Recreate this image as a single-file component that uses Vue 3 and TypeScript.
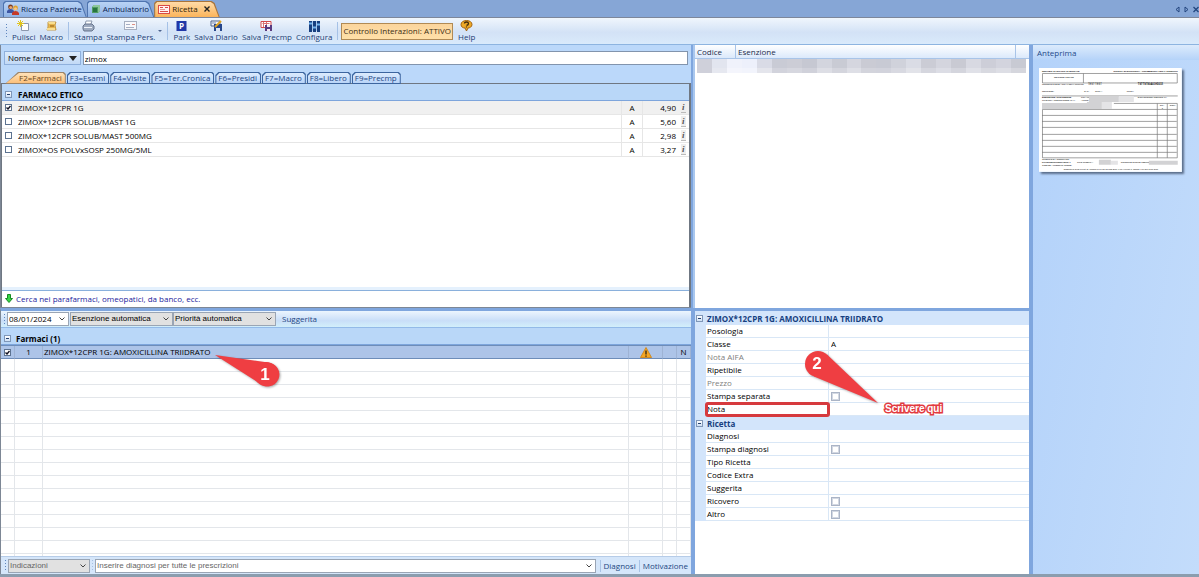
<script setup lang="ts">
import { ref } from 'vue'

interface Drug { name: string; cls: string; price: string; checked: boolean }
interface Prop { label: string; value?: string; muted?: boolean; check?: boolean; marked?: boolean }

const search = ref('zimox')
const drugs = ref<Drug[]>([
  { name: 'ZIMOX*12CPR 1G', cls: 'A', price: '4,90', checked: true },
  { name: 'ZIMOX*12CPR SOLUB/MAST 1G', cls: 'A', price: '5,60', checked: false },
  { name: 'ZIMOX*12CPR SOLUB/MAST 500MG', cls: 'A', price: '2,98', checked: false },
  { name: 'ZIMOX*OS POLVxSOSP 250MG/5ML', cls: 'A', price: '3,27', checked: false },
])
const categories = ['F2=Farmaci', 'F3=Esami', 'F4=Visite', 'F5=Ter.Cronica', 'F6=Presidi', 'F7=Macro', 'F8=Libero', 'F9=Precmp']
const drugProps: Prop[] = [
  { label: 'Posologia' },
  { label: 'Classe', value: 'A' },
  { label: 'Nota AIFA', muted: true },
  { label: 'Ripetibile' },
  { label: 'Prezzo', muted: true },
  { label: 'Stampa separata', check: true },
  { label: 'Nota', marked: true },
]
const recipeProps: Prop[] = [
  { label: 'Diagnosi' },
  { label: 'Stampa diagnosi', check: true },
  { label: 'Tipo Ricetta' },
  { label: 'Codice Extra' },
  { label: 'Suggerita' },
  { label: 'Ricovero', check: true },
  { label: 'Altro', check: true },
]
const groups = [
  { title: 'ZIMOX*12CPR 1G: AMOXICILLINA TRIIDRATO', rows: drugProps },
  { title: 'Ricetta', rows: recipeProps },
]
const mosaic = ['#cfd0da', '#e2e5ef', '#f0f2fb', '#edf0fb', '#d9dbe6', '#c9cbd5', '#cccdd6', '#c6c8d2', '#d3d5de', '#c9cbd4', '#d5d6df', '#cacbd4', '#c8cad4', '#d0d2db', '#dadce5', '#cbccd5', '#d4d5de', '#c9cad3', '#d8d9e2', '#cdced8', '#d3d4de', '#c8cad3']
const mosaicLow = ['#cfd0da', '#e6e8f0', '#f4f5fc', '#f2f4fc', '#e4e5ec', '#d2d3dc', '#d6d7df', '#d0d1da', '#dddee5', '#d4d5dd', '#dedfe6', '#d3d4dc', '#d2d3dc', '#d8d9e1', '#e2e3e9', '#d5d6de', '#dcdde5', '#d4d5dd', '#e0e1e8', '#d8d9e0', '#dddee5', '#d5d6dd']
</script>

<template>
  <div class="app">
    <nav class="tabs">
      <button class="tab">
        <svg width="12" height="11" viewBox="0 0 12 11"><circle cx="3.5" cy="3" r="2.4" fill="#7a3d22" /><circle cx="3.7" cy="3.6" r="1.5" fill="#e9a76d" /><path d="M0 9V7q1-2 3.500-2T7 7v2z" fill="#3d57a4" /><circle cx="8.500" cy="4" r="2.400" fill="#e0a12c" /><circle cx="8.500" cy="4.800" r="1.500" fill="#f5c78e" /><path d="M5 11V9q1-2 3.500-2T12 9v2z" fill="#c53a28" /></svg>
        <span>Ricerca Paziente</span>
      </button>
      <button class="tab">
        <svg width="10" height="10" viewBox="0 0 10 10"><path d="M1 3L3 1h6v6L7 9H1z" fill="#4f9c62" /><path d="M3 1h6v6L7 9V3H1z" fill="#8ec69a" /><rect x="2" y="4" width="4" height="4" fill="#28743f" /></svg>
        <span>Ambulatorio</span>
      </button>
      <button class="tab current">
        <svg width="12" height="9" viewBox="0 0 12 9"><rect x=".5" y=".5" width="11" height="8" fill="#fff3f1" stroke="#d84c48" /><path d="M2 2.500h3M7 2.500h3M2 6.500h8" stroke="#d84c48" /><path d="M2 4.500h5" stroke="#e89390" /></svg>
        <span>Ricetta</span>
        <svg class="x" width="6" height="6" viewBox="0 0 6 6"><path d="M.5 .5l5 5M5.500 .5l-5 5" stroke="#222" stroke-width="1.400" /></svg>
      </button>
      <div class="tabnav">
        <button aria-label="Scheda precedente"><svg width="5" height="7" viewBox="0 0 5 7"><path d="M4 1v5L1 3.500z" fill="none" stroke="#23457e" /></svg></button>
        <button aria-label="Scheda successiva"><svg width="5" height="7" viewBox="0 0 5 7"><path d="M1 1v5l3-2.500z" fill="none" stroke="#23457e" /></svg></button>
        <button aria-label="Chiudi"><svg width="6" height="7" viewBox="0 0 6 7"><path d="M.5 1l5 5M5.500 1l-5 5" stroke="#23457e" stroke-width="1.300" /></svg></button>
      </div>
    </nav>

    <header class="toolbar">
      <i class="grip"></i>
      <button class="tool"><svg viewBox="0 0 13 12"><path d="M4.500 3.500h7v7h-7z" fill="#fff" stroke="#8c98ad" /><path d="M3.500 0v7M0 3.500h7M1 1l5 5M6 1L1 6" stroke="#e2c51e" /></svg>Pulisci</button>
      <button class="tool"><svg viewBox="0 0 13 12"><path d="M3 2h8l-1 3 1 5H2l1-3z" fill="#e8b850" stroke="#c39a4a" /><path d="M3 2h7v2H4zM2 8h8v2H2z" fill="#f8de91" /><path d="M5 6h4" stroke="#8e5b13" /></svg>Macro</button>
      <i class="sep"></i>
      <button class="tool"><svg viewBox="0 0 13 12"><path d="M4 1h6L8.500 5H3z" fill="#fff" stroke="#8c99ae" /><path d="M1 6l2-2h7l2 2v3l-2 2H2L1 9z" fill="#9eabc0" stroke="#67758d" /><path d="M2 7.500h8" stroke="#eef3fa" /></svg>Stampa</button>
      <button class="tool"><svg viewBox="0 0 13 12"><rect x=".5" y="1.500" width="12" height="8" fill="#f8f8fb" stroke="#a5aec0" /><path d="M2 4.500h4M2 7.500h8" stroke="#a4aec4" /><path d="M8 4.500h3" stroke="#dd8f86" /></svg>Stampa Pers.</button>
      <button class="more" aria-label="Altre stampe"><svg width="5" height="4" viewBox="0 0 5 4"><path d="M0 1h4L2 3z" fill="#4c638d" /></svg></button>
      <i class="sep"></i>
      <button class="tool"><svg viewBox="0 0 13 12"><rect x="1.500" y="1" width="10" height="10" fill="#2138a8" /><text x="6.500" y="9" text-anchor="middle" font-size="8" font-weight="700" fill="#fff">P</text></svg>Park</button>
      <button class="tool"><svg viewBox="0 0 13 12"><path d="M1 1h9v5H1z" fill="#f1f4fa" stroke="#4e6289" /><path d="M4 4h8v7H4z" fill="#27478c" /><path d="M6 8h4v3H6z" fill="#dce4f2" /><path d="M11 1L5 7" stroke="#e0a321" stroke-width="2" /><path d="M2 3h4" stroke="#7b8db0" /></svg>Salva Diario</button>
      <button class="tool"><svg viewBox="0 0 13 12"><path d="M1 1.500h10v6H1z" fill="#fff" stroke="#d44a4a" /><path d="M2.500 3.500h7M3.500 2v5M6.500 2v3" stroke="#d97474" /><path d="M5 5h7v6H5z" fill="#583b80" /><path d="M7 5h3v2H7zM7 9h3v2H7z" fill="#f2e8f2" /></svg>Salva Precmp</button>
      <button class="tool"><svg viewBox="0 0 13 12"><path d="M1 1h11v10H1z" fill="#a9c9ef" /><path d="M2.500 1v11M6.500 1v11M10.500 1v11" stroke="#173f80" stroke-width="3" /><path d="M1 3.500h3M5 7.500h3M9 4.500h3" stroke="#70b3ef" stroke-width="2" /></svg>Configura</button>
      <i class="sep"></i>
      <button class="interactions">Controllo Interazioni: ATTIVO</button>
      <button class="tool"><svg viewBox="0 0 13 12"><path d="M6.500 .5c3 0 5.500 1.500 5.500 4S9.500 8 8 8l-1.500 3L5 8C3 8 1 7 1 4.500s2.500-4 5.500-4z" fill="#eda928" stroke="#a36313" /><path d="M4.500 3.500q0-1.500 2-1.500t2 1.500-2 2M6.500 6.500v1" fill="none" stroke="#432b0c" stroke-width="1.300" /></svg>Help</button>
    </header>

    <main class="work">
      <section class="left">
        <div class="finder">
          <div class="searchrow">
            <button class="mode">Nome farmaco <svg width="8" height="5" viewBox="0 0 8 5"><path d="M0 0h8L4 5z" fill="#222" /></svg></button>
            <input v-model="search" class="query" type="text" aria-label="Nome farmaco" />
          </div>
          <div class="cats">
            <button v-for="(c, i) in categories" :key="c" class="cat" :class="{ on: i === 0 }"><span>{{ c }}</span></button>
          </div>
          <div class="results">
            <h2 class="group"><button class="fold" aria-label="Comprimi"></button>FARMACO ETICO</h2>
            <table class="drugs">
              <tbody>
                <tr v-for="d in drugs" :key="d.name" :class="{ picked: d.checked }">
                  <td class="ck"><input v-model="d.checked" type="checkbox" :aria-label="d.name" /></td>
                  <td>{{ d.name }}</td>
                  <td class="cl">{{ d.cls }}</td>
                  <td class="pr">{{ d.price }}</td>
                  <td class="inf"><button aria-label="Informazioni">i</button></td>
                </tr>
              </tbody>
            </table>
            <a class="extra" href="#"><svg width="8" height="9" viewBox="0 0 8 9"><path d="M2.500 .5h3v4h2L4 8.500.5 4.500h2z" fill="#35d546" stroke="#168a24" /></svg>Cerca nei parafarmaci, omeopatici, da banco, ecc.</a>
          </div>
        </div>

        <div class="orders">
          <div class="options">
            <i class="grip"></i>
            <select class="date" aria-label="Data"><option>08/01/2024</option></select>
            <select class="auto" aria-label="Esenzione"><option>Esenzione automatica</option></select>
            <select class="auto" aria-label="Priorità"><option>Priorità automatica</option></select>
            <button class="link">Suggerita</button>
          </div>
          <h2 class="group second"><button class="fold" aria-label="Comprimi"></button>Farmaci (1)</h2>
          <div class="gridwrap">
            <table class="grid">
              <colgroup><col class="g1" /><col class="g2" /><col /><col class="g3" /><col class="g4" /><col class="g4" /></colgroup>
              <tbody>
                <tr class="sel">
                  <td><input type="checkbox" checked aria-label="Seleziona farmaco" /></td>
                  <td class="mid">1</td>
                  <td>ZIMOX*12CPR 1G: AMOXICILLINA TRIIDRATO</td>
                  <td class="mid"><svg width="12" height="11" viewBox="0 0 12 11"><path d="M6 .5L11.500 10.500H.5z" fill="#f5a623" stroke="#d08b25" stroke-linejoin="round" /><path d="M6 3.500v4M6 8.500v1.200" stroke="#2b2110" stroke-width="1.300" /></svg></td>
                  <td></td>
                  <td class="mid">N</td>
                </tr>
                <tr v-for="n in 16" :key="n"><td v-for="c in 6" :key="c"></td></tr>
              </tbody>
            </table>
            <svg class="pin one" width="66" height="36" viewBox="0 0 66 36"><path d="M0 3L53 10.500A12 12 0 1 1 44 31z" fill="#ef3e42" /><circle cx="51" cy="22" r="12" fill="#ef3e42" /><text x="50" y="28" text-anchor="middle">1</text></svg>
          </div>
          <div class="diag">
            <i class="grip"></i>
            <select class="ind" aria-label="Indicazioni"><option>Indicazioni</option></select>
            <i class="grip thin"></i>
            <select class="all" aria-label="Diagnosi per tutte le prescrizioni"><option>Inserire diagnosi per tutte le prescrizioni</option></select>
            <button class="link">Diagnosi</button>
            <button class="link">Motivazione</button>
          </div>
        </div>
      </section>

      <section class="center">
        <div class="exempt">
          <table>
            <thead><tr><th class="code">Codice</th><th>Esenzione</th><th class="tail"></th></tr></thead>
          </table>
          <div class="mosaic"><i v-for="(m, i) in mosaic" :key="i" :style="{ background: m }"></i></div>
          <div class="mosaic low"><i v-for="(m, i) in mosaicLow" :key="i" :style="{ background: m }"></i></div>
        </div>
        <div class="props">
          <table>
            <colgroup><col class="p1" /><col class="p2" /><col /></colgroup>
            <tbody v-for="(g, gi) in groups" :key="g.title">
              <tr class="head"><th class="gut"><button class="fold small" aria-label="Comprimi"></button></th><th colspan="2">{{ g.title }}</th></tr>
              <tr v-for="(p, pi) in g.rows" :key="p.label">
                <td class="gut"></td>
                <td class="name" :class="{ muted: p.muted, marked: p.marked }"><label :for="`p${gi}-${pi}`">{{ p.label }}</label></td>
                <td class="val">
                  <input v-if="p.check" :id="`p${gi}-${pi}`" class="soft" type="checkbox" />
                  <input v-else :id="`p${gi}-${pi}`" class="txt" type="text" :value="p.value" />
                </td>
              </tr>
            </tbody>
          </table>
          <svg class="pin two" width="76" height="54" viewBox="0 0 76 54"><circle cx="13" cy="13" r="13" fill="#ef3e42" /><path d="M22 3.500L73 52 9 25.500z" fill="#ef3e42" /><text x="12" y="18" text-anchor="middle">2</text></svg>
          <strong class="note">Scrivere qui</strong>
        </div>
      </section>

      <aside class="preview">
        <h2>Anteprima</h2>
        <svg class="sheet" viewBox="0 0 143 104">
          <rect width="143" height="104" fill="#fff" />
          <g fill="#000" font-size="2.300">
            <text x="3" y="4" font-weight="700">SERVIZIO SANITARIO NAZIONALE</text>
            <text x="139" y="4" text-anchor="end" font-weight="700">RICETTA ELETTRONICA - PROMEMORIA PER L'ASSISTITO</text>
            <text x="15" y="10">REGIONE MOLISE</text>
            <text x="3" y="17" font-size="1.900">COGNOME E NOME / INIZIALI DELL'ASSISTITO:</text>
            <text x="49" y="17" font-size="2.600">TEST TEST</text>
            <text x="99" y="17" font-weight="700" font-size="2.600">TSTTST80A01H501X</text>
            <text x="3" y="24">INDIRIZZO:</text><text x="45" y="24">CAP:</text><text x="56" y="24">CITTA':</text><text x="88" y="24">PROV:</text>
            <text x="3" y="30" font-weight="700">ESENZIONE: NON ESENTE</text><text x="42" y="30" font-size="1.900">SIGLA PR:</text><text x="99" y="30">DISPOSIZIONI REGIONALI:</text>
            <text x="3" y="33" font-size="2.100">TIPOLOGIA PRESCRIZIONE (S,H):</text><text x="42" y="33">ALTRO:</text>
            <text x="121" y="38">QTA</text><text x="131" y="38">NOTA</text><text x="123" y="41">1</text>
            <text x="3" y="92">QUESITO DIAGNOSTICO:</text>
            <text x="3" y="95" font-size="1.900" font-weight="700">N.CONFEZIONI/PRESTAZIONI: 1</text><text x="38" y="95">TIPO RICETTA:</text><text x="82" y="95" font-size="2.100">COGNOME E NOME MEDICO:</text>
            <text x="3" y="98">CODICE AUTENTICAZIONE:</text>
            <text x="72" y="102" text-anchor="middle" font-size="2">Rilasciato ai sensi dell'art.11, comma 16 del DL 31 mag 2010, n.78 e dell'art.1, comma 4 del DM 2 nov 2011</text>
          </g>
          <path d="M3.500 5.500H138.500V15H3.500zM44.500 5.500V15M3 28H139M75 35.500H138.500V90H3.500V41.500H138.500M118.500 35.500V90M128.500 35.500V90M3 47.500H138M3 53.500H138M3 59.500H138M3 66.500H138M3 72.500H138M3 78.500H138M3 84.500H138" fill="none" stroke="#777" stroke-width=".7" />
          <g fill="#d2d2d4"><path d="M50 28h30v6H50zM3 35h45v6H3zM48 34h15v7H48zM60 92h12v5H60zM110 93h29v4h-29z" /><path d="M80 28h15v6H80zM63 34h10v7H63zM72 93h7v4h-7z" fill="#e4e4e6" /></g>
        </svg>
      </aside>
    </main>
  </div>
</template>

<style scoped>
.app, .app * { box-sizing: border-box; }
.app {
  height: 100vh; display: flex; flex-direction: column; overflow: hidden;
  font: 8px/12px "Open Sans", "Noto Sans", sans-serif; color: #000; background: #bbd8fa;
  border-bottom: 3px solid #8b9dae;
}
button, input, select { font: inherit; color: inherit; margin: 0; padding: 0; border: 0; background: none; border-radius: 0; outline: none; }
button { white-space: nowrap; }
svg { display: block; flex: none; }
h2 { margin: 0; font: inherit; font-weight: 700; }
table { border-collapse: separate; border-spacing: 0; table-layout: fixed; width: 100%; }
td, th { padding: 0; text-align: left; white-space: nowrap; }

.tabs { flex: none; height: 18px; display: flex; align-items: flex-end; padding-left: 3px; background: #86a6d6; border-bottom: 1px solid #7d879b; }
.tab {
  position: relative; z-index: 0; height: 16px; display: flex; align-items: center; gap: 2px; padding: 0 5px 0 4px;
  color: #0b2450; background: #4f75b0; clip-path: polygon(0 2px, 2px 0, calc(100% - 8px) 0, calc(100% - 5px) 2px, 100% 100%, 0 100%);
}
.tab::before { content: ""; position: absolute; z-index: -1; inset: 1px 1px 0; background: linear-gradient(#b9d3f5, #8fb3e5); clip-path: inherit; }
.tab.current { padding: 0 10px 0 4px; background: #a9743a; color: #2a1a06; }
.tab.current::before { background: linear-gradient(#ffdba8, #fbb45a); }
.tab .x { margin-left: 4px; }
.tabnav { margin-left: auto; display: flex; align-items: center; gap: 4px; height: 16px; }

.toolbar {
  flex: none; height: 27px; display: flex; align-items: center; padding-left: 3px; color: #1d3d74;
  background: linear-gradient(#f0f6fd, #d3e2f6 55%, #d9eafb); border-bottom: 1px solid #8db4e0;
}
.grip { flex: none; width: 3px; height: 16px; margin: 0 2px; background: radial-gradient(circle, #5f86bd 1px, transparent 1px) 0 0 / 3px 3px; }
.tool { height: 22px; padding: 0 2px; display: flex; flex-direction: column; align-items: center; line-height: 10px; }
.tool svg { width: 13px; height: 12px; }
.sep { width: 1px; height: 18px; background: #a5c1e6; margin: 0 3px; }
.more { padding: 0 1px; }
.interactions { height: 17px; padding: 0 1px; margin-right: 3px; background: linear-gradient(#fbd59d, #ffe0a8); border: 1px solid #b08a55; color: #3c2e14; }

.work { flex: 1; min-height: 0; display: grid; grid-template-columns: 693fr 340fr 166fr; }
.left, .center { min-width: 0; min-height: 0; display: flex; flex-direction: column; border-right: 4px solid #7fa6de; }
.left { border-right-width: 2px; }
.finder { flex: none; height: 263px; display: flex; flex-direction: column; border-bottom: 1px solid #7d8795; border-left: 1px solid #7d8795; }
.searchrow { display: flex; gap: 2px; padding: 6px 3px 0 3px; }
.mode { height: 14px; padding: 0 3px; display: flex; align-items: center; gap: 5px; border: 1px solid #8fb0dc; background: linear-gradient(#dcebfc, #c2d9f6); }
.query { flex: 1; min-width: 0; height: 14px; padding: 0 1px; background: #fff; border: 1px solid #8294ad; }
.cats { display: flex; align-items: flex-end; height: 19px; padding-left: 4px; margin-bottom: -1px; }
.cat {
  position: relative; z-index: 0; height: 12px; padding: 0 4px 0 3px; line-height: 12px; color: #1d4682; background: #3c659f;
  clip-path: polygon(0 3px, 3px 0, calc(100% - 2px) 0, 100% 2px, 100% 100%, 0 100%); margin-right: 1px;
}
.cat::before { content: ""; position: absolute; z-index: -1; inset: 1px; background: linear-gradient(#dcebfd, #b9d4f8); clip-path: inherit; }
.cat.on { padding: 0 4px 0 14px; clip-path: polygon(0 100%, 13px 0, calc(100% - 2px) 0, 100% 2px, 100% 100%); color: #6b4a1d; background: #9c8468; }
.cat.on::before { background: linear-gradient(#ffe2b9, #fcc07a); }
.results { flex: 1; min-height: 0; display: flex; flex-direction: column; background: #fff; border: 1px solid #6f7782; border-width: 1px 2px 0 1px; }
.group { flex: none; height: 17px; line-height: 10px; display: flex; align-items: flex-end; gap: 6px; padding: 0 0 0 3px; background: #b9d7f8; border-bottom: 1px solid #7da5dc; }
.fold { position: relative; flex: none; width: 7px; height: 7px; margin-bottom: 2px; background: linear-gradient(#fff, #cddff5); border: 1px solid #7f97b8; }
.fold::after { content: ""; position: absolute; left: 1px; right: 1px; top: 2px; height: 1px; background: #24406e; }
.drugs td { height: 14px; line-height: 13px; border-bottom: 1px solid #e6e6e6; }
.drugs .picked { background: #f0f0f0; }
.drugs .ck { width: 16px; padding-left: 3px; }
.drugs .cl { width: 22px; text-align: center; border-left: 1px solid #e6e6e6; border-right: 1px solid #e6e6e6; }
.drugs .pr { width: 33px; text-align: right; }
.drugs .inf { width: 13px; padding-left: 5px; }
.inf button { display: block; font: italic 700 9px/10px "Liberation Serif", serif; color: #555; border-bottom: 1px solid #bbb; background: #eee; padding: 0 1px; }
input[type="checkbox"] { appearance: none; display: block; width: 7px; height: 7px; border: 1px solid #5c7391; background: #fff; }
input[type="checkbox"]:checked { background: url("data:image/svg+xml,%3Csvg xmlns='http://www.w3.org/2000/svg' width='5' height='5'%3E%3Cpath d='M.5 2.500L2 4 4.500 1' fill='none' stroke='%23112' stroke-width='1.400'/%3E%3C/svg%3E") #fff; }
.extra { margin-top: auto; height: 20px; padding: 3px 0 0 3px; display: flex; align-items: center; gap: 3px; color: #1a1a9c; text-decoration: none; background: linear-gradient(#e5f1fd 0 3px, #8ab0dc 3px 4px, #fff 4px); }

.orders { flex: 1; min-height: 0; display: flex; flex-direction: column; border-top: 3px solid #7fa6de; border-left: 1px solid #7d8795; }
.options { flex: none; height: 17px; display: flex; align-items: center; background: linear-gradient(#ecf5fe, #c9def8 60%, #d2effb); border-bottom: 1px solid #93bae8; padding-left: 1px; }
.options .grip, .diag .grip { height: 13px; margin: 0 1px; }
select {
  appearance: none; height: 14px; line-height: 12px; padding: 0 1px; border: 1px solid #9aa5b4; font-size: 8px; font-family: "Liberation Sans", Arial, sans-serif;
  background: url("data:image/svg+xml,%3Csvg xmlns='http://www.w3.org/2000/svg' width='6' height='4'%3E%3Cpath d='M.5.500L3 3 5.500.500' fill='none' stroke='%23444'/%3E%3C/svg%3E") no-repeat right 3px center #e1e1e1;
}
.date { width: 62px; background-color: #fff; font-family: inherit; margin-right: 1px; }
.auto { width: 103px; }
.link { padding: 0 6px; color: #1d4682; }
.group.second { gap: 5px; }
.gridwrap { position: relative; flex: 1; min-height: 0; overflow: hidden; background: #fff; border-top: 1px solid #6e8db9; }
.grid td { height: 13px; line-height: 12px; border: 1px solid #e3e6ea; border-width: 0 1px 1px 0; }
.grid tr.sel td { background: #adc4e8; border-color: #9eb3d4; border-bottom-color: #6e8db9; }
.grid td:nth-child(3) { padding-left: 1px; }
.grid input { margin-left: 3px; }
.grid .mid { text-align: center; }
.grid .mid svg { margin: auto; }
.g1 { width: 14px; } .g2 { width: 28px; } .g3 { width: 34px; } .g4 { width: 14px; }
.pin { position: absolute; z-index: 2; filter: drop-shadow(1px 1px 1px #0005); }
.pin text { font: 700 17px "Liberation Sans", Arial, sans-serif; fill: #fff; }
.one { left: 214px; top: 6px; }
.diag { flex: none; height: 18px; display: flex; align-items: center; padding: 0 0 0 2px; background: #d5e6fa; border-top: 1px solid #b6cce8; }
.diag select { color: #666; }
.ind { width: 82px; }
.thin { opacity: .4; }
.all { flex: 1; min-width: 0; background-color: #fff; }
.diag .link { border-left: 1px solid #a8c3e6; padding: 0 3px; }
.diag .all + .link { margin-left: 4px; }

.exempt { flex: none; height: 263px; background: #fff; border-left: 2px solid #a9c7ee; overflow: hidden; }
.exempt th { height: 14px; font-weight: 400; padding-left: 2px; background: linear-gradient(#fff, #dbe9fb); border-bottom: 1px solid #a8c4e8; color: #1d2c4a; }
.exempt .code { width: 41px; border-right: 1px solid #a8c4e8; }
.exempt .tail { width: 14px; border-left: 1px solid #a8c4e8; }
.mosaic { display: flex; height: 9px; padding: 0 3px 0 2px; }
.mosaic i { flex: 1; }
.mosaic.low { height: 5px; }
.props { position: relative; flex: 1; min-height: 0; background: #fff; border-top: 3px solid #7fa6de; border-left: 2px solid #7fa6de; }
.props td, .props th { height: 13px; line-height: 12px; }
.p1 { width: 11px; } .p2 { width: 123px; }
.props .gut { background: #d3e5fb; }
.props .head th { height: 14px; background: #d3e5fb; color: #163f80; font-weight: 700; line-height: 11px; }
.props .head th + th { padding-left: 1px; }
.fold.small { display: block; margin: 0 0 0 1px; width: 7px; height: 7px; }
.name { padding-left: 1px; border-bottom: 1px solid #d9e7f6; border-right: 1px solid #d9e7f6; }
.muted { color: #808080; }
.marked { outline: 3px solid #d63a3e; outline-offset: -2px; border-radius: 2px; position: relative; z-index: 1; }
.val { border-bottom: 1px solid #d9e7f6; padding-left: 2px; }
.val .txt { display: block; width: 100%; height: 11px; }
.val .soft { width: 9px; height: 9px; border: 2px solid #d3d8e2; outline: 1px solid #aab4c6; outline-offset: -1px; }
.two { left: 110px; top: 40px; }
.note { position: absolute; left: 190px; top: 92px; z-index: 2; font: 700 10px/12px "Liberation Sans", Arial, sans-serif; color: #fff; -webkit-text-stroke: 3px #e23a3f; paint-order: stroke fill; }

.preview { min-width: 0; background: linear-gradient(100deg, #b3d2fa, #c3dcfb); }
.preview h2 { height: 15px; padding: 1px 4px; line-height: 14px; font-weight: 400; color: #1f4a8a; background: linear-gradient(#dcebfc, #b5d3f9); }
.sheet { width: 86%; margin: 8px 0 0 6px; box-shadow: 2px 2px 2px #5c6f8b; font-family: "Liberation Sans", Arial, sans-serif; }
</style>
